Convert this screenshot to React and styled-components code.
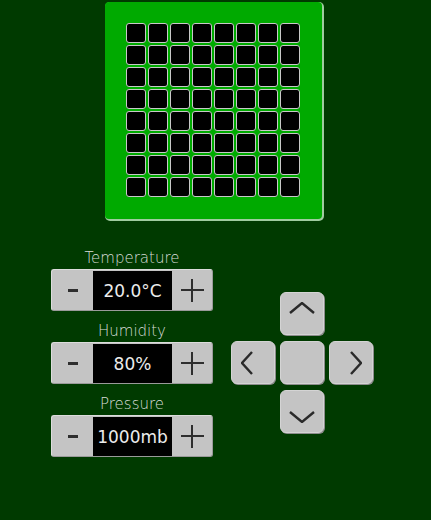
import React from "react"
import styled, { createGlobalStyle } from "styled-components"

const GlobalStyle = createGlobalStyle`
    html, body {
        margin: 0;
        padding: 0;
        background: #003a00;
    }
    body {
        font-family: "DejaVu Sans", "Liberation Sans", sans-serif;
    }
`

const Page = styled.div`
    width: 431px;
    height: 520px;
    background: #003a00;
    padding-top: 2px;
    box-sizing: border-box;
`

const Panel = styled.div`
    margin-left: 105px;
    width: 217px;
    height: 217px;
    box-sizing: border-box;
    padding: 21px 0 0 21px;
    background: #00aa00;
    border-radius: 4px;
    box-shadow: 1px 1px 0 1px #9fcc9f;
`

const LedGrid = styled.div`
    display: grid;
    grid-template-columns: repeat(8, 20px);
    grid-auto-rows: 20px;
    gap: 2px;
`

const Led = styled.div`
    box-sizing: border-box;
    background: #000;
    border: 1.5px solid #c8c8c8;
    border-radius: 3px;
`

const Controls = styled.div`
    display: flex;
    margin-top: 30px;
    padding-left: 51px;
    gap: 18px;
`

const SensorColumn = styled.div`
    display: flex;
    flex-direction: column;
    gap: 11px;
    width: 162px;
`

const SensorGroup = styled.div`
    display: flex;
    flex-direction: column;
    gap: 2px;
`

const Label = styled.div`
    height: 18px;
    line-height: 18px;
    text-align: center;
    font-size: 15px;
    font-weight: 200;
    color: #d8dcd8;
`

const Stepper = styled.div`
    display: flex;
    height: 42px;
    box-sizing: border-box;
    border: 1px solid #dcdcdc;
    border-right-color: #9a9a9a;
    border-bottom-color: #9a9a9a;
    border-radius: 3px;
    background: #c4c4c4;
    overflow: hidden;
`

const StepButton = styled.div`
    width: ${p => p.$w}px;
    display: flex;
    align-items: center;
    justify-content: center;
`

const MinusBar = styled.div`
    width: 10px;
    height: 3px;
    background: #2e2e2e;
`

const PlusSign = styled.div`
    position: relative;
    width: 23px;
    height: 23px;
    &::before, &::after {
        content: "";
        position: absolute;
        background: #2e2e2e;
    }
    &::before {
        left: 0;
        right: 0;
        top: 10px;
        height: 2.5px;
    }
    &::after {
        top: 0;
        bottom: 0;
        left: 10px;
        width: 2.5px;
    }
`

const Display = styled.div`
    width: 79px;
    margin: 1px 0 0;
    background: #000;
    display: flex;
    align-items: center;
    justify-content: center;
    color: #ececec;
    font-size: 17px;
`

const DPad = styled.div`
    margin-top: 43px;
    display: grid;
    grid-template-columns: repeat(3, 44px);
    grid-auto-rows: 43px;
    gap: 6px 5px;
    align-self: flex-start;
`

const PadButton = styled.div`
    grid-column: ${p => p.$col};
    grid-row: ${p => p.$row};
    box-sizing: border-box;
    background: #c4c4c4;
    border: 1px solid #d4d4d4;
    border-radius: 6px;
    box-shadow: 1px 1px 0 #8c8c8c;
    display: flex;
    align-items: center;
    justify-content: center;
    svg {
        transform: translate(${p => p.$dx || 0}px, ${p => p.$dy || 0}px);
    }
`

const Chevron = ({ dir }) => {
    const pts = {
        up: "1,11 13,1 25,11",
        down: "1,1 13,11 25,1",
        left: "11,1 1,12 11,23",
        right: "1,1 11,12 1,23",
    }[dir]
    const vertical = dir === "up" || dir === "down"
    const w = vertical ? 26 : 12
    const h = vertical ? 12 : 24
    return (
        <svg width={w} height={h} viewBox={`0 0 ${w} ${h}`}>
            <polyline points={pts} fill="none" stroke="#2a2a2a" strokeWidth="2.4" />
        </svg>
    )
}

const sensors = [
    { label: "Temperature", value: "20.0°C" },
    { label: "Humidity", value: "80%" },
    { label: "Pressure", value: "1000mb" },
]

export default function App() {
    return <>
        <GlobalStyle />
        <Page>
            <Panel>
                <LedGrid>
                    {Array.from({ length: 64 }, (_, i) => <Led key={i} />)}
                </LedGrid>
            </Panel>
            <Controls>
                <SensorColumn>
                    {sensors.map(s => (
                        <SensorGroup key={s.label}>
                            <Label>{s.label}</Label>
                            <Stepper>
                                <StepButton $w={41}><MinusBar /></StepButton>
                                <Display>{s.value}</Display>
                                <StepButton $w={40}><PlusSign /></StepButton>
                            </Stepper>
                        </SensorGroup>
                    ))}
                </SensorColumn>
                <DPad>
                    <PadButton $col={2} $row={1} $dy={-6}><Chevron dir="up" /></PadButton>
                    <PadButton $col={1} $row={2} $dx={-6}><Chevron dir="left" /></PadButton>
                    <PadButton $col={2} $row={2} />
                    <PadButton $col={3} $row={2} $dx={5}><Chevron dir="right" /></PadButton>
                    <PadButton $col={2} $row={3} $dy={5}><Chevron dir="down" /></PadButton>
                </DPad>
            </Controls>
        </Page>
    </>
}
